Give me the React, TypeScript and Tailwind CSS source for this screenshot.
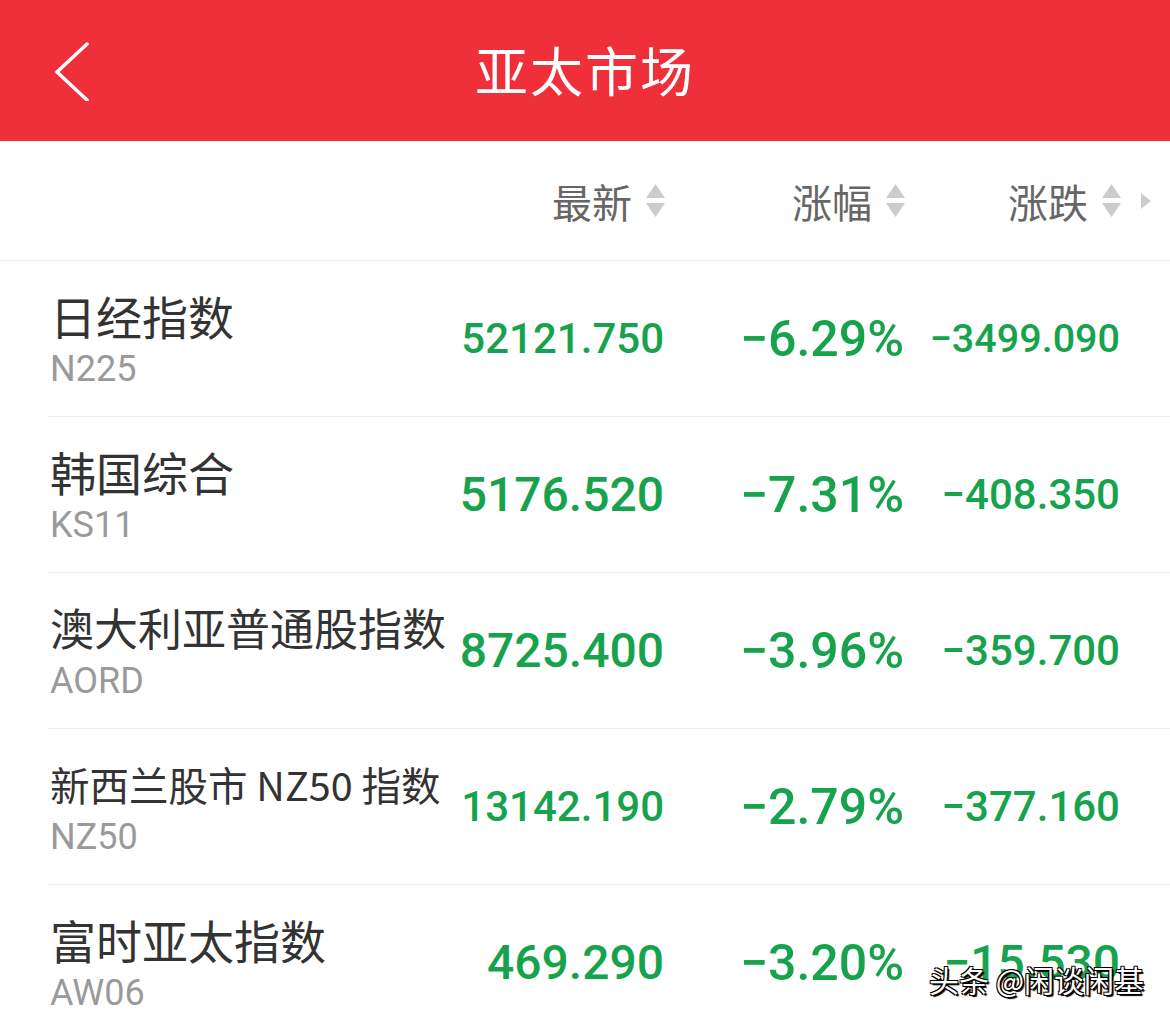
import React from 'react';

const cjk = "font-['Noto_Sans_CJK_SC','Noto_Sans',sans-serif]";
const num = "font-['Roboto','Noto_Sans',sans-serif]";

interface Row {
  name: string;
  code: string;
  nameSize: string;
  last: string;
  lastSize: string;
  pct: string;
  chg: string;
  chgSize: string;
}

const rows: Row[] = [
  { name: '日经指数', code: 'N225', nameSize: 'text-[46px]', last: '52121.750', lastSize: 'text-[42px]', pct: '−6.29%', chg: '−3499.090', chgSize: 'text-[39.5px]' },
  { name: '韩国综合', code: 'KS11', nameSize: 'text-[46px]', last: '5176.520', lastSize: 'text-[48px]', pct: '−7.31%', chg: '−408.350', chgSize: 'text-[42px]' },
  { name: '澳大利亚普通股指数', code: 'AORD', nameSize: 'text-[44px]', last: '8725.400', lastSize: 'text-[48px]', pct: '−3.96%', chg: '−359.700', chgSize: 'text-[42px]' },
  { name: '新西兰股市 NZ50 指数', code: 'NZ50', nameSize: 'text-[39.5px]', last: '13142.190', lastSize: 'text-[42px]', pct: '−2.79%', chg: '−377.160', chgSize: 'text-[42px]' },
  { name: '富时亚太指数', code: 'AW06', nameSize: 'text-[46px]', last: '469.290', lastSize: 'text-[48px]', pct: '−3.20%', chg: '−15.530', chgSize: 'text-[48px]' },
];

const SortArrows = () => (
  <svg width="21" height="38" viewBox="0 0 21 38" className="ml-[13px]">
    <polygon points="10.5,2 20,16 1,16" fill="#cccccc" />
    <polygon points="1,21 20,21 10.5,35" fill="#cccccc" />
  </svg>
);

const HeaderCell: React.FC<{ label: string; width: string }> = ({ label, width }) => (
  <div className={`${width} flex items-center justify-end`}>
    <span className={`${cjk} text-[40px] leading-none text-[#666666]`}>{label}</span>
    <SortArrows />
  </div>
);

export default function App() {
  return (
    <div className="w-[1170px] h-[1026px] overflow-hidden bg-white relative">
      {/* Top bar */}
      <div className="h-[141px] bg-[#ef2f39] grid grid-cols-[1fr_auto_1fr] items-center">
        <div className="pl-[54px] flex items-center">
          <svg width="36" height="60" viewBox="0 0 36 60" fill="none">
            <polyline points="33,3 3,31 33,59" stroke="#ffffff" strokeWidth="3.5" strokeLinecap="round" strokeLinejoin="round" />
          </svg>
        </div>
        <div className={`${cjk} text-[53px] leading-none text-white tracking-[2px] -mt-[2px]`}>亚太市场</div>
        <div />
      </div>

      {/* Column headers */}
      <div className="h-[120px] border-b border-[#ececec] flex items-center pl-[48px]">
        <div className="w-[406px]" />
        <HeaderCell label="最新" width="w-[212px]" />
        <HeaderCell label="涨幅" width="w-[240px]" />
        <HeaderCell label="涨跌" width="w-[216px]" />
        <svg width="12" height="18" viewBox="0 0 12 18" className="ml-[18px]">
          <polygon points="1,1 11,9 1,17" fill="#cccccc" />
        </svg>
      </div>

      {/* Rows */}
      <div className="pl-[48px]">
        {rows.map((r) => (
          <div key={r.code} className="h-[156px] border-b border-[#ececec] grid grid-cols-[406px_210px_240px_216px] items-center">
            <div className="pl-[2px] flex flex-col">
              <span className={`${cjk} ${r.nameSize} leading-[55px] text-[#333333] whitespace-nowrap`}>{r.name}</span>
              <span className={`${num} text-[36px] leading-[40px] text-[#9a9a9a] mt-[6px]`}>{r.code}</span>
            </div>
            <div className={`${num} ${r.lastSize} font-medium leading-none text-[#17a34d] text-right`}>{r.last}</div>
            <div className={`${num} text-[50px] font-medium leading-none text-[#17a34d] text-right`}>{r.pct}</div>
            <div className={`${num} ${r.chgSize} font-medium leading-none text-[#17a34d] text-right`}>{r.chg}</div>
          </div>
        ))}
      </div>

      {/* Watermark */}
      <div
        className={`${cjk} absolute left-[929px] top-[964px] text-[30px] leading-none text-white [text-shadow:1px_1px_0_#000,-1px_-1px_0_#000,1px_-1px_0_#000,-1px_1px_0_#000,2px_2px_1px_#000]`}
      >
        头条 @闲谈闲基
      </div>
    </div>
  );
}
